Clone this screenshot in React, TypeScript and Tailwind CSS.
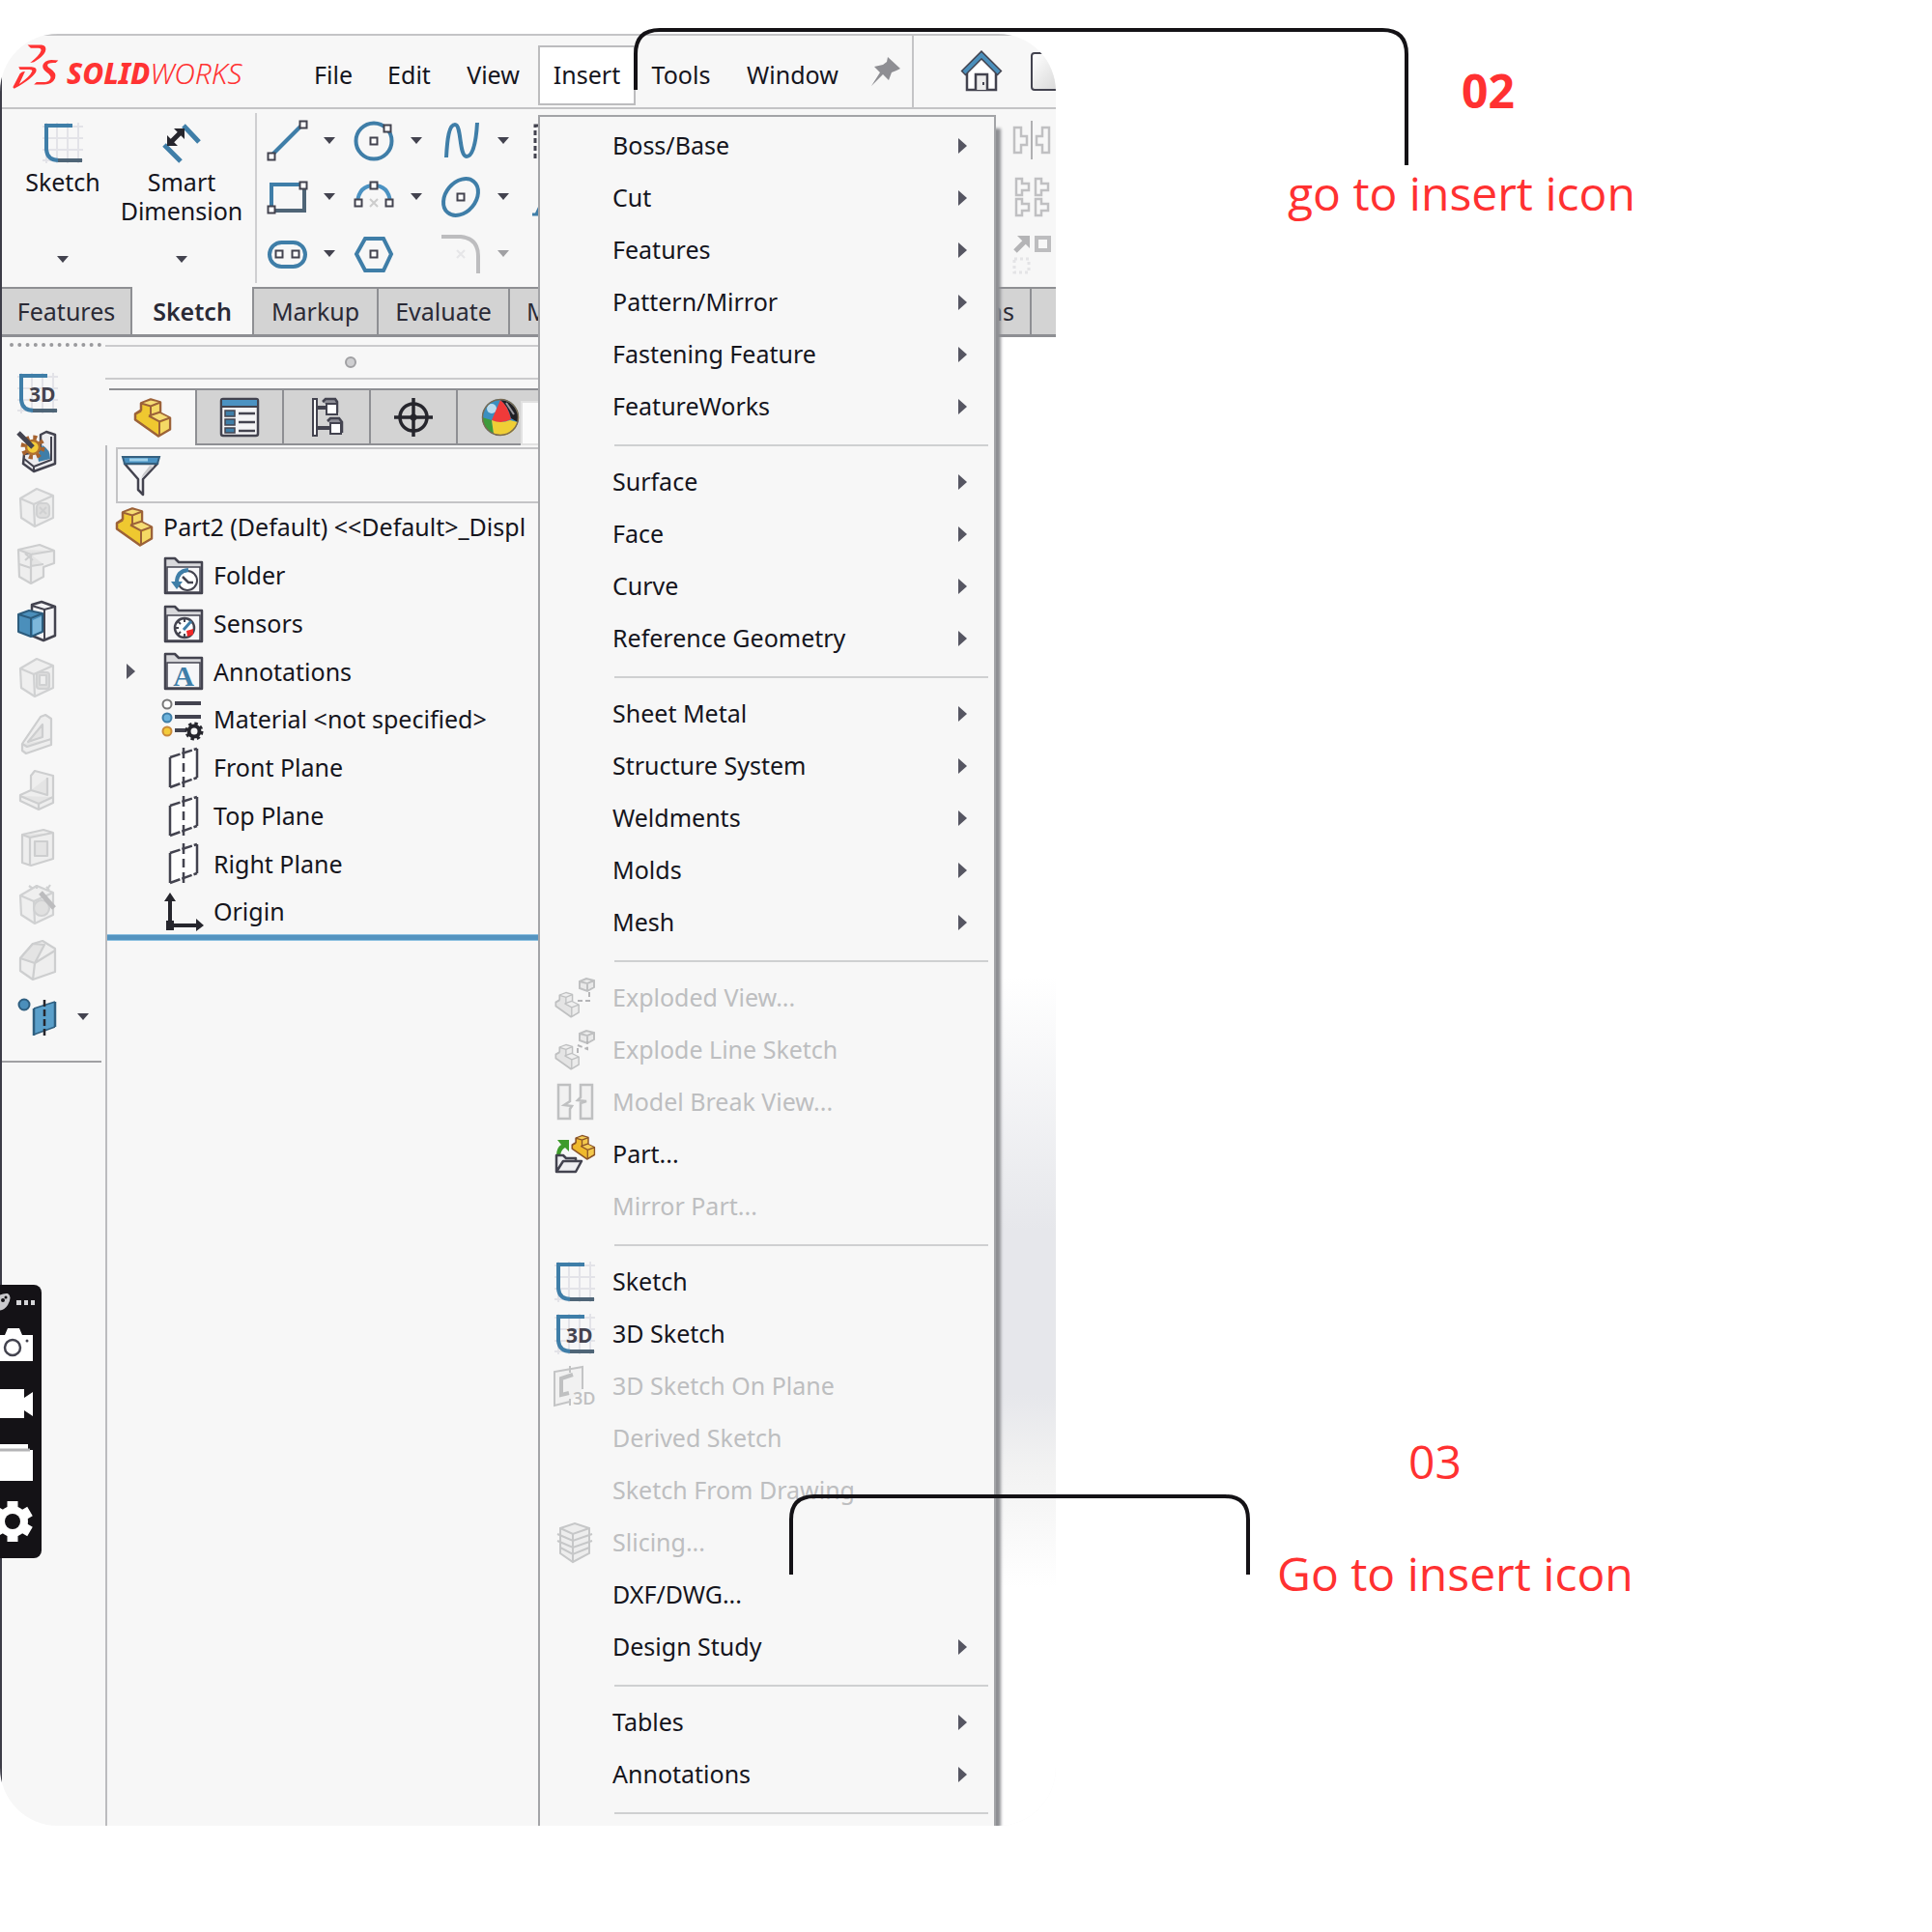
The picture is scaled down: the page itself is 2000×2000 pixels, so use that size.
import React from 'react';

type IconProps = { className?: string };

type MenuEntry = {
  label: string;
  submenu?: boolean;
  disabled?: boolean;
  icon?: React.ReactNode;
};

const DARK = '#43434f';
const BLUE = '#3f7ea8';
const PALE = '#d0d1d2';

function Icon({ children, className = 'h-10 w-10', viewBox = '0 0 40 40' }: IconProps & { children: React.ReactNode; viewBox?: string }) {
  return (
    <svg className={`shrink-0 overflow-visible ${className}`} viewBox={viewBox} fill="none" aria-hidden="true">
      {children}
    </svg>
  );
}

function Handle({ x, y }: { x: number; y: number }) {
  return <rect x={x - 3.5} y={y - 3.5} width="7" height="7" fill="#fff" stroke={DARK} strokeWidth="2" />;
}

function CaretDown({ pale }: { pale?: boolean }) {
  return (
    <svg className="h-[7px] w-3 shrink-0" viewBox="0 0 12 7" aria-hidden="true">
      <path d="M0 0H12L6 7Z" fill={pale ? '#a0a0a3' : DARK} />
    </svg>
  );
}

function CaretRight() {
  return (
    <svg className="h-4 w-[9px] shrink-0" viewBox="0 0 9 16" aria-hidden="true">
      <path d="M0 0L9 8L0 16Z" fill="#565662" />
    </svg>
  );
}

function DsLogo() {
  return (
    <Icon className="h-12 w-[49px]" viewBox="36 24 148 144">
      <path
        d="M86 28H130Q148 31 141 50Q135 64 106 82L94 84Q124 60 128 46Q129 39 120 38H96Z"
        fill="#ff3333"
      />
      <path
        d="M58 97H98Q116 98 113 110Q106 130 44 165L40 160L62 118Q70 110 78 111L60 150Q94 126 100 110Q102 105 92 105H62Z"
        fill="#ff3333"
      />
      <path
        d="M182 76L174 84Q148 82 148 92Q148 97 158 103Q178 116 172 132Q164 151 138 152H106L114 144H142Q154 142 158 132Q160 124 146 114Q130 103 134 90Q140 76 160 75Z"
        fill="#ff3333"
      />
    </Icon>
  );
}

function SketchGrid() {
  return (
    <>
      <path d="M4 0V42M15 0V42M26 0V42M37 0V42M0 4H42M0 16H42M0 28H42M0 39H42" stroke="#e3e3e8" strokeWidth="2" />
      <path d="M31 3H4V28Q5 39 17 39" stroke={BLUE} strokeWidth="4" />
      <path d="M16 39H41" stroke="#4f6577" strokeWidth="4" />
    </>
  );
}

function SketchIcon() {
  return (
    <Icon className="h-[42px] w-[42px]" viewBox="0 0 42 42">
      <SketchGrid />
    </Icon>
  );
}

function Sketch3DIcon() {
  return (
    <Icon className="h-[42px] w-[42px]" viewBox="0 0 42 42">
      <SketchGrid />
      <text x="12" y="30" fill={DARK} fontSize="21" fontWeight="700" fontFamily="Open Sans, sans-serif">3D</text>
    </Icon>
  );
}

function DimensionIcon() {
  return (
    <Icon>
      <path d="M22 2L38 19M2 22L19 39" stroke={BLUE} strokeWidth="5" />
      <path d="M8 20L20 8" stroke="#26262d" strokeWidth="5" />
      <path d="M12 5H23V16ZM5 12V23H16Z" fill="#26262d" />
    </Icon>
  );
}

function LineIcon() {
  return (
    <Icon>
      <path d="M4 36L36 4" stroke={BLUE} strokeWidth="4" />
      <Handle x={4} y={37} />
      <Handle x={37} y={4} />
    </Icon>
  );
}

function CircleIcon() {
  return (
    <Icon>
      <circle cx="20" cy="21" r="18.5" stroke={BLUE} strokeWidth="4" />
      <Handle x={20} y={21} />
      <Handle x={34} y={8} />
    </Icon>
  );
}

function SplineIcon() {
  return (
    <Icon>
      <path d="M5 38C6 18 8 4 14 4C21 4 18 37 26 37C33 37 36 20 37 2" stroke={BLUE} strokeWidth="4" />
    </Icon>
  );
}

function RectIcon() {
  return (
    <Icon>
      <path d="M4 34V7H36" stroke={BLUE} strokeWidth="4" />
      <path d="M4 34H38V7" stroke="#4f6577" strokeWidth="4" />
      <Handle x={4} y={33} />
      <Handle x={37} y={8} />
    </Icon>
  );
}

function ArcIcon() {
  return (
    <Icon>
      <path d="M3 25Q5 8 20 8T37 25" stroke="#4b92c2" strokeWidth="4" />
      <path d="M16 22L24 30M24 22L16 30" stroke="#ccc" strokeWidth="2" />
      <Handle x={20} y={8} />
      <Handle x={4} y={26} />
      <Handle x={36} y={26} />
    </Icon>
  );
}

function EllipseIcon() {
  return (
    <Icon>
      <ellipse cx="20" cy="20" rx="21" ry="15.500" transform="rotate(-50 20 20)" stroke={BLUE} strokeWidth="4" />
      <Handle x={20} y={20} />
    </Icon>
  );
}

function SlotIcon() {
  return (
    <Icon>
      <rect x="2" y="8" width="37" height="25" rx="12.500" stroke={BLUE} strokeWidth="4" />
      <Handle x={12} y={20} />
      <Handle x={29} y={20} />
    </Icon>
  );
}

function PolygonIcon() {
  return (
    <Icon>
      <path d="M11 4H30L38 20L30 37H11L2 20Z" stroke={BLUE} strokeWidth="4" />
      <Handle x={20} y={20} />
    </Icon>
  );
}

function FilletIcon() {
  return (
    <Icon>
      <path d="M0 2H20Q38 4 38 22V40" stroke="#bdbdbf" strokeWidth="4" />
      <path d="M16 16L24 24M24 16L16 24" stroke="#e6e6e8" strokeWidth="2" />
    </Icon>
  );
}

function MirrorIcon() {
  return (
    <Icon>
      <path d="M2 7H9V16H15V25H9V33H2ZM38 7H31V16H25V25H31V33H38Z" stroke="#c0c0c2" strokeWidth="2.5" />
      <path d="M20 0V40" stroke="#b0b0b2" strokeWidth="2" />
    </Icon>
  );
}

function PatternIcon() {
  return (
    <Icon>
      <path d="M4 1H10V6H17V13H10V18H4ZM24 1H30V6H37V13H30V18H24ZM4 22H10V27H17V34H10V39H4ZM24 22H30V27H37V34H30V39H24Z" stroke="#c0c0c2" strokeWidth="2.5" />
    </Icon>
  );
}

function MoveIcon() {
  return (
    <Icon>
      <path d="M3 17L15 5" stroke="#b4b4b6" strokeWidth="5" />
      <path d="M5 1H18V14Z" fill="#b4b4b6" />
      <rect x="25" y="3" width="13" height="13" stroke="#bdbdbf" strokeWidth="4" />
      <rect x="2" y="25" width="15" height="14" stroke="#e4e4e6" strokeWidth="3" strokeDasharray="3 3" />
    </Icon>
  );
}

function PinIcon() {
  return (
    <Icon className="h-8 w-8" viewBox="0 0 32 32">
      <path d="M18 1L31 13L27 15L22 17L19 25L13 19L1 31L10 17L4 11L13 9L17 6Z" fill="#8e8e93" />
    </Icon>
  );
}

function HomeIcon() {
  return (
    <Icon className="h-[42px] w-[42px]" viewBox="0 0 42 42">
      <path d="M6 20V40H36V20L21 6Z" fill="#fff" stroke={DARK} strokeWidth="2.5" />
      <path d="M15 40V24H27V40" fill="#ececec" stroke={DARK} strokeWidth="2.5" />
      <path d="M23 32V35" stroke={DARK} strokeWidth="2" />
      <path d="M2 23L21 4L40 23" stroke={DARK} strokeWidth="7" />
      <path d="M3 22L21 4L39 22" stroke="#4b8fbb" strokeWidth="4" />
    </Icon>
  );
}

function PartShape({ body, line, light }: { body: string; line: string; light: string }) {
  return (
    <>
      <path d="M2 16L8 12V5L18 1L28 4V15L38 20V32L26 39L2 22Z" fill={body} stroke={line} strokeWidth="2.5" strokeLinejoin="round" />
      <path d="M18 9L27 5V14L18 18ZM27 26L37 21V31L27 37Z" fill={light} opacity="0.7" />
      <path d="M9 5L18 2L27 4L18 8ZM18 18L27 15L37 20L27 24Z" fill={light} opacity="0.9" />
      <path d="M8 5L18 8L28 4M18 8V17M2 16L8 13M16 18L27 24L38 20M16 18L28 14M27 24V38" stroke={line} strokeWidth="2" />
    </>
  );
}

function PartIcon() {
  return (
    <Icon className="h-[42px] w-10" viewBox="0 0 40 41">
      <PartShape body="#efc830" line="#9c6238" light="#f6df7c" />
    </Icon>
  );
}

function PropertyIcon() {
  return (
    <Icon>
      <rect x="1" y="1" width="38" height="38" rx="2" fill="#f4f4f6" stroke={DARK} strokeWidth="2.5" />
      <path d="M2 2H38V9H2Z" fill="#4b92c2" />
      <path d="M1 9H39" stroke={DARK} strokeWidth="2" />
      <path d="M5 13H15V19H5ZM5 22H15V28H5ZM5 31H15V36H5Z" fill={BLUE} stroke={DARK} strokeWidth="1.5" />
      <path d="M19 16H36M19 25H36M19 34H36" stroke={DARK} strokeWidth="2.5" />
    </Icon>
  );
}

function ConfigIcon() {
  return (
    <Icon>
      <path d="M6 1H10V39H6Z" fill="#fff" stroke={DARK} strokeWidth="2" />
      <path d="M10 10H20M10 31H24" stroke={DARK} strokeWidth="4" />
      <path d="M16 4L19 1H29L31 4V15M21 24L24 21H33L36 25V36" fill="#8f8f97" stroke={DARK} strokeWidth="2.5" />
      <rect x="20" y="6" width="11" height="11" fill="#fff" stroke={DARK} strokeWidth="2" />
      <rect x="24" y="26" width="11" height="11" fill="#fff" stroke={DARK} strokeWidth="2" />
    </Icon>
  );
}

function TargetIcon() {
  return (
    <Icon>
      <circle cx="20" cy="20" r="14" stroke="#26262d" strokeWidth="3.5" />
      <path d="M20 0V40M0 20H40" stroke="#26262d" strokeWidth="3.5" />
      <circle cx="20" cy="20" r="3.5" fill="#26262d" />
    </Icon>
  );
}

function AppearanceIcon() {
  return (
    <Icon>
      <circle cx="20" cy="20" r="19" fill="#3b8fc0" />
      <circle cx="11" cy="11" r="5" fill="#b9dcef" />
      <path d="M11 23L20 2Q28 8 31 22Q20 28 11 23Z" fill="#f03a3a" />
      <path d="M1 20L11 23L13 37Q2 32 1 20Z" fill="#3d9b3b" />
      <path d="M11 23Q20 27 30 23L38 25Q34 39 20 39L13 37Z" fill="#f0cf35" />
      <path d="M20 2Q35 3 39 20L38 25L31 21Q28 8 20 2Z" fill="#1f1f24" />
      <path d="M26 5L34 17" stroke="#9a9aa0" strokeWidth="2" />
      <circle cx="20" cy="20" r="18.5" stroke="#7a6a50" strokeWidth="1.5" />
    </Icon>
  );
}

function FunnelIcon() {
  return (
    <Icon className="h-[42px] w-10" viewBox="0 0 40 42">
      <path d="M3 9L17 25V36L22 41V25L37 9Z" fill="#f6f6f8" stroke={DARK} strokeWidth="2.5" strokeLinejoin="round" />
      <path d="M29 11L22 20L20 24L33 12Z" fill="#c9c9cc" />
      <path d="M1 2H39L37 9H3Z" fill="#4b92c2" stroke="#35607f" strokeWidth="2" />
      <path d="M8 5H27" stroke="#9fd0ea" strokeWidth="3" />
    </Icon>
  );
}

function FolderBase({ children }: { children: React.ReactNode }) {
  return (
    <Icon className="h-10 w-[42px]" viewBox="0 0 42 40">
      <path d="M2 38V2H12L16 6H40V38Z" fill="#d9d9dc" stroke={DARK} strokeWidth="2.5" strokeLinejoin="round" />
      <rect x="4" y="11" width="34" height="26" fill="#f6f6f8" stroke={DARK} strokeWidth="1.5" />
      {children}
    </Icon>
  );
}

function HistoryFolderIcon() {
  return (
    <FolderBase>
      <circle cx="25" cy="25" r="10" fill="#fff" stroke={DARK} strokeWidth="2" />
      <path d="M20 21L26 27H31" stroke={DARK} strokeWidth="2.5" />
      <path d="M26 14Q14 15 14 27" stroke={BLUE} strokeWidth="4" />
      <path d="M8 26H20L14 34Z" fill={BLUE} />
    </FolderBase>
  );
}

function SensorFolderIcon() {
  return (
    <FolderBase>
      <circle cx="22" cy="24" r="10" fill="#fff" stroke={DARK} strokeWidth="2.5" />
      <path d="M22 15V18M13 24H16M15 17L18 20M15 31L18 28M22 33V30" stroke={DARK} strokeWidth="2" />
      <path d="M21 26L29 17" stroke={BLUE} strokeWidth="3" />
      <path d="M24 27L31 25V31L25 33Z" fill="#f02828" />
    </FolderBase>
  );
}

function AnnotationFolderIcon() {
  return (
    <FolderBase>
      <text x="21" y="35" textAnchor="middle" fill={BLUE} fontSize="30" fontWeight="700" fontFamily="Liberation Serif, serif">A</text>
    </FolderBase>
  );
}

function MaterialIcon() {
  return (
    <Icon className="h-10 w-[42px]" viewBox="0 0 42 40">
      <circle cx="4" cy="4" r="4.5" fill="#fff" stroke="#777" strokeWidth="2" />
      <circle cx="4" cy="18" r="4.5" fill="#6db3dc" stroke={BLUE} strokeWidth="2" />
      <circle cx="4" cy="32" r="4.5" fill="#f3cb3a" stroke="#c98a3b" strokeWidth="2" />
      <path d="M12 3H39M12 17H39M12 31H24" stroke={DARK} strokeWidth="4" />
      <circle cx="32" cy="32" r="5.5" stroke="#26262d" strokeWidth="4" />
      <circle cx="32" cy="32" r="8" stroke="#26262d" strokeWidth="3" strokeDasharray="3.4 2.9" />
    </Icon>
  );
}

function PlaneIcon() {
  return (
    <Icon className="h-[42px] w-[42px]" viewBox="0 0 42 42">
      <path d="M7 10L35 1V31L7 41Z" fill="#fdfdfd" />
      <path d="M7 10V41M35 1V31" stroke={DARK} strokeWidth="2.5" />
      <path d="M7 10L35 1M7 41L35 31" stroke={DARK} strokeWidth="2.5" strokeDasharray="11 2" />
      <path d="M21 0V42" stroke={DARK} strokeWidth="2.5" strokeDasharray="11 5 9 5" />
    </Icon>
  );
}

function OriginIcon() {
  return (
    <Icon className="h-10 w-[42px]" viewBox="0 0 42 40">
      <path d="M7 36V6M7 34H36" stroke="#26262d" strokeWidth="4" />
      <path d="M1 9L7 0L13 9ZM34 27L42 34L34 40ZM3 29H11V39H3Z" fill="#26262d" />
    </Icon>
  );
}

function WizardIcon() {
  return (
    <Icon>
      <path d="M24 3L30 0L39 3V33L17 41L6 33L7 23L24 20Z" fill="#ececef" stroke={DARK} strokeWidth="2.5" strokeLinejoin="round" />
      <path d="M35 5V29L17 36L7 28M17 36V40" stroke={DARK} strokeWidth="2" />
      <path d="M26 14Q34 18 34 28L22 31Q20 25 26 14Z" fill={BLUE} />
      <circle cx="16" cy="16" r="10" stroke="#a5622f" strokeWidth="5" strokeDasharray="3.9 3.95" />
      <circle cx="16" cy="16" r="7" fill="#f3cb3a" stroke="#b0702f" strokeWidth="2.5" />
      <path d="M1 1L16 16" stroke={DARK} strokeWidth="5" />
    </Icon>
  );
}

function BossIcon() {
  return (
    <Icon>
      <path d="M15 3L25 0L39 5V35L27 40L15 35Z" fill="#f4f4f6" stroke={DARK} strokeWidth="2.5" strokeLinejoin="round" />
      <path d="M15 4L28 8L39 5M28 8V40" stroke={DARK} strokeWidth="2" />
      <path d="M1 13L12 9L26 12V31L14 36L1 31Z" fill="#4b8fbb" stroke="#2c5c7d" strokeWidth="2" strokeLinejoin="round" />
      <path d="M1 13L14 17L26 12M14 17V36" stroke="#2c5c7d" strokeWidth="2" />
      <path d="M16 19L25 15V30L16 34Z" fill="#7db7da" />
    </Icon>
  );
}

function PaleCube({ children }: { children?: React.ReactNode }) {
  return (
    <Icon>
      <g stroke={PALE} strokeWidth="2.2" strokeLinejoin="round">
        <path d="M3 11L20 1L37 8V31L18 40L4 31Z" fill="#efefef" />
        <path d="M3 11L17 17L37 8M17 17L18 40" />
        {children}
      </g>
    </Icon>
  );
}

function PaleDrawing({ d, extra }: { d: string; extra?: string }) {
  return (
    <Icon>
      <g stroke="#cdcecf" strokeWidth="2.2" strokeLinejoin="round">
        <path d={d} fill="#eeeeee" />
        {extra && <path d={extra} fill="#e4e4e4" />}
      </g>
    </Icon>
  );
}

function RefPlaneIcon() {
  return (
    <Icon>
      <path d="M17 11L39 4V30L17 38Z" fill="#5a9fca" />
      <path d="M17 11V39M39 4V30" stroke="#2f5f80" strokeWidth="2.5" />
      <path d="M17 11L39 4M17 38L39 30" stroke="#2f5f80" strokeWidth="1.5" />
      <path d="M28 2V40" stroke="#26262d" strokeWidth="2.5" strokeDasharray="7 3" />
      <circle cx="7" cy="7" r="5.5" fill="#4b8fbb" stroke="#2f5f80" strokeWidth="2" />
    </Icon>
  );
}

function ExplodedIcon({ dash }: { dash: string }) {
  return (
    <Icon className="h-[42px] w-[42px]" viewBox="0 0 42 42">
      <g transform="translate(0 15) scale(0.66)">
        <PartShape body="#e4e4e4" line="#bfc0c1" light="#efefef" />
      </g>
      <path d="M26 4L33 1L41 3V10L34 14L26 11ZM26 4L34 6L41 3M34 6V14" fill="#e9e9e9" stroke="#bfc0c1" strokeWidth="2" />
      <path d={dash} stroke="#b5b5b7" strokeWidth="2" strokeDasharray="5 3" />
    </Icon>
  );
}

function BreakIcon() {
  return (
    <Icon className="h-[42px] w-[42px]" viewBox="0 0 42 42">
      <path d="M4 3H16V20L10 24L18 25L16 28V38H4ZM27 3H39V38H27V22L33 20L24 19L27 16Z" fill="#f1f1f1" stroke="#bfc0c1" strokeWidth="2.5" />
    </Icon>
  );
}

function InsertPartIcon() {
  return (
    <Icon className="h-[42px] w-[42px]" viewBox="0 0 42 42">
      <g transform="translate(17 1) scale(0.64)">
        <PartShape body="#efb92c" line="#8a5328" light="#f5cf5a" />
      </g>
      <path d="M2 22Q2 14 7 11L3 6H15V18L11 14Q7 16 6 22Z" fill="#3d9b2b" />
      <path d="M2 39V22H9L12 25H22V28M2 39L9 28H28L22 39Z" fill="#eeeef1" stroke={DARK} strokeWidth="2.5" strokeLinejoin="round" />
    </Icon>
  );
}

function SketchOnPlaneIcon() {
  return (
    <Icon className="h-[42px] w-[42px]" viewBox="0 0 42 42">
      <path d="M29 24V1L0 6V41L16 37" fill="#f1f1f1" stroke="#c3c4c5" strokeWidth="2" />
      <path d="M19 9L7 13V30L15 28" stroke="#bfc0c1" strokeWidth="4" />
      <path d="M16 0V7M16 34V41" stroke="#c3c4c5" strokeWidth="2" />
      <text x="19" y="40" fill="#bfc0c1" fontSize="18" fontWeight="600" fontFamily="Open Sans, sans-serif">3D</text>
    </Icon>
  );
}

function SlicingIcon() {
  return (
    <Icon className="h-[42px] w-[42px]" viewBox="0 0 42 42">
      <path d="M6 6L21 1L36 6V32L19 41L6 32Z" fill="#ededed" stroke="#c6c7c8" strokeWidth="2" />
      <path d="M6 6L19 12L36 6M19 12V41M3 12L19 19L39 12M3 19L19 26L39 19M6 26L19 33L36 26" stroke="#c6c7c8" strokeWidth="2" />
    </Icon>
  );
}

const menuGroups: MenuEntry[][] = [
  [
    { label: 'Boss/Base', submenu: true },
    { label: 'Cut', submenu: true },
    { label: 'Features', submenu: true },
    { label: 'Pattern/Mirror', submenu: true },
    { label: 'Fastening Feature', submenu: true },
    { label: 'FeatureWorks', submenu: true },
  ],
  [
    { label: 'Surface', submenu: true },
    { label: 'Face', submenu: true },
    { label: 'Curve', submenu: true },
    { label: 'Reference Geometry', submenu: true },
  ],
  [
    { label: 'Sheet Metal', submenu: true },
    { label: 'Structure System', submenu: true },
    { label: 'Weldments', submenu: true },
    { label: 'Molds', submenu: true },
    { label: 'Mesh', submenu: true },
  ],
  [
    { label: 'Exploded View...', disabled: true, icon: <ExplodedIcon dash="M24 24H36V12" /> },
    { label: 'Explode Line Sketch', disabled: true, icon: <ExplodedIcon dash="M24 24V16L34 20V12" /> },
    { label: 'Model Break View...', disabled: true, icon: <BreakIcon /> },
    { label: 'Part...', icon: <InsertPartIcon /> },
    { label: 'Mirror Part...', disabled: true },
  ],
  [
    { label: 'Sketch', icon: <SketchIcon /> },
    { label: '3D Sketch', icon: <Sketch3DIcon /> },
    { label: '3D Sketch On Plane', disabled: true, icon: <SketchOnPlaneIcon /> },
    { label: 'Derived Sketch', disabled: true },
    { label: 'Sketch From Drawing', disabled: true },
    { label: 'Slicing...', disabled: true, icon: <SlicingIcon /> },
    { label: 'DXF/DWG...' },
    { label: 'Design Study', submenu: true },
  ],
  [
    { label: 'Tables', submenu: true },
    { label: 'Annotations', submenu: true },
  ],
];

const treeItems = [
  { label: 'Folder', icon: <HistoryFolderIcon /> },
  { label: 'Sensors', icon: <SensorFolderIcon /> },
  { label: 'Annotations', icon: <AnnotationFolderIcon />, expandable: true },
  { label: 'Material <not specified>', icon: <MaterialIcon /> },
  { label: 'Front Plane', icon: <PlaneIcon /> },
  { label: 'Top Plane', icon: <PlaneIcon /> },
  { label: 'Right Plane', icon: <PlaneIcon /> },
  { label: 'Origin', icon: <OriginIcon /> },
];

const sketchTools = [
  { name: 'Line', icon: <LineIcon />, caret: true },
  { name: 'Circle', icon: <CircleIcon />, caret: true },
  { name: 'Spline', icon: <SplineIcon />, caret: true },
  { name: 'Rectangle', icon: <RectIcon />, caret: true },
  { name: 'Arc', icon: <ArcIcon />, caret: true },
  { name: 'Ellipse', icon: <EllipseIcon />, caret: true },
  { name: 'Slot', icon: <SlotIcon />, caret: true },
  { name: 'Polygon', icon: <PolygonIcon />, caret: false },
  { name: 'Fillet', icon: <FilletIcon />, caret: true, pale: true },
];

const sideTools = [
  { name: '3D sketch', icon: <Sketch3DIcon /> },
  { name: 'Hole wizard', icon: <WizardIcon /> },
  {
    name: 'Cut extrude',
    icon: (
      <PaleCube>
        <rect x="20" y="16" width="13" height="15" rx="4" fill="#dedede" />
        <path d="M23 20L30 27M30 20L23 27" />
      </PaleCube>
    ),
  },
  { name: 'Combine', icon: <PaleDrawing d="M1 5L23 0L38 6V19L27 23V33L14 40L2 33Z" extra="M1 5L14 10L38 6M14 10V22L27 20M14 22V40M2 20L14 24M8 9L16 16M16 9L8 16" /> },
  { name: 'Boss extrude', icon: <BossIcon /> },
  {
    name: 'Shell',
    icon: (
      <PaleCube>
        <rect x="20" y="15" width="13" height="17" rx="3" fill="#dedede" />
        <rect x="23" y="18" width="7" height="10" fill="#efefef" />
      </PaleCube>
    ),
  },
  { name: 'Rib', icon: <PaleDrawing d="M5 30L24 2L29 0L35 4V31L9 40L5 37Z" extra="M11 28L26 10V23ZM5 30L10 33L35 25" /> },
  { name: 'Draft', icon: <PaleDrawing d="M14 5L18 0L37 5V33L22 40L3 31V25L14 20Z" extra="M14 20L31 25V7M3 26L22 34L37 27M22 34V40" /> },
  { name: 'Split', icon: <PaleDrawing d="M5 7L27 2L37 5V32L14 39L5 36Z" extra="M5 7L13 10L37 5M13 10V39M18 14H31V29H18Z" /> },
  {
    name: 'Instant feature',
    icon: (
      <PaleCube>
        <circle cx="25" cy="24" r="8" fill="#e0e0e0" />
        <path d="M24 8L38 24" stroke="#bcbcbe" strokeWidth="5" />
        <path d="M12 1L16 4M20 0V4M30 2L33 5M34 0L30 6" />
      </PaleCube>
    ),
  },
  { name: 'Fillet', icon: <PaleDrawing d="M3 18L16 3L26 0L39 8V32L16 40L3 31Z" extra="M3 18L16 3L28 4L18 23ZM18 23L39 10M18 23L16 40" /> },
  { name: 'Reference geometry', icon: <RefPlaneIcon />, caret: true },
];

function TitleBar() {
  return (
    <header className="flex h-[78px] items-stretch overflow-hidden border-y-2 border-[#c4c4c6]">
      <div className="flex w-[305px] shrink-0 items-start pl-[10px] pt-2">
        <DsLogo />
        <div className="ml-2 mt-3 whitespace-nowrap text-[30px] leading-[38px] text-[#ff3333]">
          <span className="font-extrabold italic">SOLID</span>
          <span className="font-light italic">WORKS</span>
        </div>
      </div>
      <nav className="flex shrink-0 items-center pt-2 text-[25px]" aria-label="Main menu">
        <button className="w-[76px]">File</button>
        <button className="w-[81px]">Edit</button>
        <button className="w-[93px]">View</button>
        <button className="mt-[2px] h-[62px] w-[101px] self-start border-2 border-[#bcbcbe] bg-white" aria-expanded="true">Insert</button>
        <button className="w-[94px]">Tools</button>
        <button className="w-[137px]">Window</button>
        <button className="ml-3 pb-2" aria-label="Pin"><PinIcon /></button>
      </nav>
      <div className="ml-[11px] flex shrink-0 items-center gap-[30px] border-l-2 border-[#c4c4c6] pl-[49px]">
        <button aria-label="Home"><HomeIcon /></button>
        <button aria-label="New document" className="h-10 w-9 rounded border-2 border-[#43434f] bg-gradient-to-br from-white to-[#d5d5d5]" />
      </div>
    </header>
  );
}

function CommandBar() {
  return (
    <div className="flex h-[184px] overflow-hidden">
      <button className="flex w-[126px] shrink-0 flex-col items-center pt-[14px]">
        <SketchIcon />
        <span className="mt-1 h-[92px] text-[25px] leading-[30px]">Sketch</span>
        <CaretDown />
      </button>
      <button className="-ml-1 flex w-[128px] shrink-0 flex-col items-center pt-[15px]">
        <DimensionIcon />
        <span className="mt-[5px] h-[92px] text-[25px] leading-[30px]">Smart<br />Dimension</span>
        <CaretDown />
      </button>
      <div className="ml-3 mt-1 h-[176px] w-[2px] shrink-0 bg-[#cfcfd1]" />
      <div className="ml-[11px] grid shrink-0 grid-cols-[90px_90px_90px] grid-rows-[58px_59px_59px] items-center pt-[3px]">
        {sketchTools.map((tool) => (
          <button key={tool.name} aria-label={tool.name} className="flex items-center gap-[18px]">
            {tool.icon}
            {tool.caret && <CaretDown pale={tool.pale} />}
          </button>
        ))}
      </div>
      {/* the select tool and text tool peek out from under the menu */}
      <div className="ml-1 grid w-10 shrink-0 grid-rows-[58px_59px_59px] items-center pt-[3px]">
        <Icon><path d="M38 5H3V39H38" stroke={DARK} strokeWidth="3" strokeDasharray="5 3" /></Icon>
        <Icon><path d="M0 38H12M4 38L20 4" stroke={BLUE} strokeWidth="3" /></Icon>
      </div>
      <div className="mr-[5px] grid grow grid-rows-[58px_59px_59px] items-center justify-end pt-[3px]">
        <button aria-label="Mirror entities" disabled><MirrorIcon /></button>
        <button aria-label="Sketch pattern" disabled><PatternIcon /></button>
        <button aria-label="Move entities" disabled><MoveIcon /></button>
      </div>
    </div>
  );
}

function CommandTabs() {
  return (
    <div className="flex h-[52px] border-b-[3px] border-t-2 border-[#8e8f93] bg-[#d3d3d3] text-[25px] text-[#2a2a36]">
      <button className="w-[135px] shrink-0 border-r-2 border-[#8e8f93]">Features</button>
      <button className="-mt-[2px] w-[126px] shrink-0 border-r-2 border-[#8e8f93] bg-[#f7f7f7] pt-[2px] font-semibold">Sketch</button>
      <button className="w-[129px] shrink-0 border-r-2 border-[#8e8f93]">Markup</button>
      <button className="w-[136px] shrink-0 border-r-2 border-[#8e8f93]">Evaluate</button>
      <button className="w-10 shrink-0 pl-[17px] text-left">M</button>
      <button className="grow border-r-2 border-[#8e8f93] pr-4 text-right">ns</button>
      <div className="w-[25px] shrink-0" />
    </div>
  );
}

function SideToolbar() {
  return (
    <div className="w-[107px] shrink-0 pr-1 pt-[6px]">
      <div className="ml-2 h-1 border-t-4 border-dotted border-[#9a9a9d]" />
      <div className="flex h-[741px] flex-col justify-between border-b-2 border-[#a0a0a3] pb-[25px] pl-4 pt-[27px]">
        {sideTools.map((tool) => (
          <button key={tool.name} aria-label={tool.name} className="flex items-center gap-[22px]">
            {tool.icon}
            {tool.caret && <CaretDown />}
          </button>
        ))}
      </div>
    </div>
  );
}

function FeatureTree() {
  return (
    <aside className="flex w-[448px] shrink-0 flex-col">
      <div className="mt-2 flex h-9 items-center justify-center border-y-2 border-[#cbcbcd] pl-[60px]">
        <span className="h-3 w-3 rounded-full border-2 border-[#a0a0a3] bg-[#cfcfd1]" />
      </div>
      <div className="ml-1 mt-[9px] flex h-[59px] border-t-2 border-[#8e8f93]">
        <button aria-label="Feature tree" className="flex w-[89px] items-center justify-center"><PartIcon /></button>
        <button aria-label="Properties" className="flex w-[90px] items-center justify-center border-b-2 border-l-2 border-[#8e8f93] bg-[#d3d3d3]"><PropertyIcon /></button>
        <button aria-label="Configurations" className="flex w-[90px] items-center justify-center border-b-2 border-l-2 border-[#8e8f93] bg-[#d3d3d3]"><ConfigIcon /></button>
        <button aria-label="Dimension expert" className="flex w-[90px] items-center justify-center border-b-2 border-l-2 border-[#8e8f93] bg-[#d3d3d3]"><TargetIcon /></button>
        <button aria-label="Appearances" className="relative flex grow items-center border-b-2 border-l-2 border-[#8e8f93] bg-[#d3d3d3] pl-6">
          <AppearanceIcon />
          <span className="absolute -bottom-[2px] right-0 h-[46px] w-[18px] border-2 border-r-0 border-[#e2e2e2] bg-[#fbfbfb]" />
        </button>
      </div>
      <div className="grow border-l-2 border-[#bcbcbe]">
        <label className="ml-[9px] mt-[2px] flex h-[58px] items-center border-2 border-r-0 border-[#c4c4c6] pl-1">
          <FunnelIcon />
          <input aria-label="Filter" className="ml-2 w-full bg-transparent text-[25px] outline-none" />
        </label>
        <ul className="mt-1 flex h-[440px] flex-col justify-between text-[25px]">
          <li className="flex h-[42px] items-center gap-[10px] whitespace-nowrap pl-2">
            <PartIcon />
            {'Part2 (Default) <<Default>_Displ'}
          </li>
          {treeItems.map((item) => (
            <li key={item.label} className="flex h-[42px] items-center whitespace-nowrap">
              <span className="flex w-[58px] shrink-0 pl-5">{item.expandable && <CaretRight />}</span>
              {item.icon}
              <span className="ml-[10px]">{item.label}</span>
            </li>
          ))}
        </ul>
        <div className="mt-[2px] h-[7px] border-y border-[#8cc0e0] bg-[#5494c0]" />
      </div>
    </aside>
  );
}

function InsertMenu() {
  return (
    <div role="menu" className="z-10 col-start-1 row-start-1 ml-[557px] mt-[84px] w-[474px] border-2 border-b-0 border-[#a3a4a7] bg-[#f7f7f7] pb-[2px] pt-[3px] text-[25px] shadow-[5px_14px_3px_0_#8e8f93]">
      {menuGroups.map((group, i) => (
        <div key={i}>
          {group.map((entry) => (
            <button
              key={entry.label}
              role="menuitem"
              disabled={entry.disabled}
              className={`flex h-[54px] w-full items-center pl-[15px] pr-[28px] text-left ${entry.disabled ? 'text-[#bdbec0]' : ''}`}
            >
              <span className="w-[60px] shrink-0">{entry.icon}</span>
              <span className="grow whitespace-nowrap">{entry.label}</span>
              {entry.submenu && <CaretRight />}
            </button>
          ))}
          <hr className="mb-[10px] ml-[77px] mr-[6px] mt-3 border-t-2 border-[#cfd0d1]" />
        </div>
      ))}
    </div>
  );
}

function RecorderBar() {
  return (
    <div className="absolute left-0 top-[1295px] z-20 h-[283px] w-[43px] overflow-hidden rounded-r-lg bg-[#141216]">
      <svg className="h-full w-full" viewBox="0 0 43 283" aria-hidden="true">
        <path d="M-8 20Q-2 8 8 9Q13 12 8 21Q2 30 -6 24Z" fill="#c9c9cc" />
        <circle cx="3" cy="16" r="2" fill="#141216" />
        <circle cx="6" cy="13" r="1.5" fill="#141216" />
        <path d="M17 16H22V21H17ZM25 16H29V21H25ZM32 16H36V21H32Z" fill="#d5d5d8" />
        <path d="M0 52H5L8 45H20L23 52H34V79H0Z" fill="#fff" />
        <circle cx="13" cy="65" r="8" stroke="#43434f" strokeWidth="2.5" fill="#fff" />
        <circle cx="28" cy="58" r="1.5" fill="#43434f" />
        <path d="M0 108H25V117L34 111V136L25 130V138H0Z" fill="#fff" />
        <path d="M0 165H29V171H34V203H0Z" fill="#fff" />
        <path d="M0 171H31" stroke="#b4b4b6" strokeWidth="3" />
        <circle cx="13" cy="245" r="11.5" stroke="#fff" strokeWidth="9" fill="none" />
        <path d="M13 224V266M-5 234.500L31 255.500M-5 255.500L31 234.500" stroke="#fff" strokeWidth="11" />
        <circle cx="13" cy="245" r="8" fill="#141216" />
      </svg>
    </div>
  );
}

function CadWindow() {
  return (
    <section className="relative grid overflow-hidden rounded-[60px] bg-[#f7f7f7]">
      <div className="col-start-1 row-start-1 flex min-w-0 flex-col border-l-2 border-[#3d3d48]">
        <TitleBar />
        <CommandBar />
        <CommandTabs />
        <div className="flex grow">
          <SideToolbar />
          <FeatureTree />
          <div className="grow bg-[linear-gradient(to_bottom,#fff_0%,#fff_43%,#e6e7eb_60%,#e6e7eb_71%,#f2f2f2_76%,#fff_84%)]" />
        </div>
      </div>
      <InsertMenu />
      <RecorderBar />
    </section>
  );
}

export default function App() {
  return (
    <main className="relative grid min-h-screen grid-cols-[1093fr_907fr] items-start bg-white pt-[35px] font-['Noto_Sans','Segoe_UI',sans-serif] text-[#15151d]">
      <CadWindow />
      <div className="flex flex-col items-start whitespace-nowrap pt-[27px] font-['Open_Sans',sans-serif] text-5xl leading-[64px] text-[#ff3131]">
        <p className="ml-[420px] font-bold">02</p>
        <p className="ml-[240px] mt-[42px]">go to insert icon</p>
        <p className="ml-[365px] mt-[1249px]">03</p>
        <p className="ml-[229px] mt-[52px]">Go to insert icon</p>
      </div>
      <svg className="pointer-events-none absolute left-[655px] top-[28px] z-30 h-[146px] w-[804px]" viewBox="0 0 804 146" fill="none" aria-hidden="true">
        <path d="M3 65V28Q3 3 28 3H776Q801 3 801 28V143" stroke="#141216" strokeWidth="4" />
      </svg>
      <svg className="pointer-events-none absolute left-[816px] top-[1546px] z-30 h-[86px] w-[480px]" viewBox="0 0 480 86" fill="none" aria-hidden="true">
        <path d="M3 84V27Q3 3 27 3H452Q476 3 476 27V84" stroke="#141216" strokeWidth="4" />
      </svg>
    </main>
  );
}
